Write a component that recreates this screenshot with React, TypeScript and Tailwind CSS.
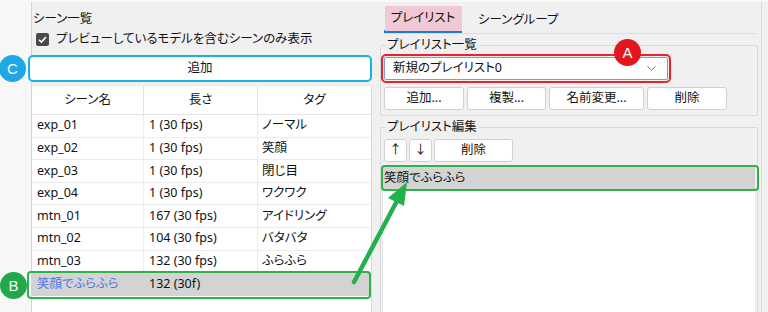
import { ChevronDown } from "lucide-react";

const scenes = [
  { name: "exp_01", length: "1 (30 fps)", tag: "ノーマル" },
  { name: "exp_02", length: "1 (30 fps)", tag: "笑顔" },
  { name: "exp_03", length: "1 (30 fps)", tag: "閉じ目" },
  { name: "exp_04", length: "1 (30 fps)", tag: "ワクワク" },
  { name: "mtn_01", length: "167 (30 fps)", tag: "アイドリング" },
  { name: "mtn_02", length: "104 (30 fps)", tag: "バタバタ" },
  { name: "mtn_03", length: "132 (30 fps)", tag: "ふらふら" },
];

const font =
  "font-['Noto_Sans','Noto_Sans_CJK_JP',sans-serif] [font-feature-settings:'palt']";

function Badge({ letter, className }: { letter: string; className: string }) {
  return (
    <span
      className={`absolute flex h-[27px] w-[27px] items-center justify-center rounded-full text-[15px] leading-none text-white font-['Liberation_Sans',sans-serif] ${className}`}
    >
      {letter}
    </span>
  );
}

function WinButton({ label, className = "" }: { label: string; className?: string }) {
  return (
    <button className={`h-[23px] rounded-[3px] border border-[#d0d0d0] bg-white text-[12.5px] leading-none text-[#111] ${className}`}>
      {label}
    </button>
  );
}

export default function App() {
  return (
    <div className={`relative flex h-[312px] w-[768px] overflow-hidden border-t-2 border-[#f8f8f8] bg-[#f0f0f0] text-[12.5px] text-[#111] ${font}`}>
      <div className="w-[32px] shrink-0 border-r border-[#d4d4d4] bg-[#f7f7f7]" />

      {/* left: scene list */}
      <div className="flex w-[340px] shrink-0 flex-col pt-[9px]">
        <p className="pl-[1px] leading-[16px]">シーン一覧</p>
        <label className="mt-[4px] flex items-center gap-[7px] pl-[4px] leading-[16px]">
          <span className="flex h-[13px] w-[13px] items-center justify-center rounded-[2px] bg-[#4a4a4a]">
            <svg viewBox="0 0 12 12" className="h-[11px] w-[11px]">
              <path d="M2.2 6.3 L4.8 8.8 L9.8 3.2" fill="none" stroke="white" strokeWidth="1.8" />
            </svg>
          </span>
          プレビューしているモデルを含むシーンのみ表示
        </label>
        <button className="relative -ml-[2px] mt-[10px] h-[23px] w-[340px] rounded-[3px] bg-white leading-none outline-2 outline-[#1ab1e6]">
          追加
        </button>

        <div className="mt-[6px] flex-1 border-r border-[#d8d8d8] bg-white">
          <div className="grid h-[29px] grid-cols-[112px_114px_113px] border-b border-[#e2e2e2]">
            {["シーン名", "長さ", "タグ"].map((h, i) => (
              <div key={h} className={`flex items-center justify-center ${i < 2 ? "border-r border-[#e2e2e2]" : ""}`}>
                {h}
              </div>
            ))}
          </div>
          {scenes.map((s) => (
            <div key={s.name} className="grid h-[22.6px] grid-cols-[112px_114px_113px] border-b border-[#ececec]">
              <div className="flex items-center border-r border-[#ececec] pl-[5px]">{s.name}</div>
              <div className="flex items-center border-r border-[#ececec] pl-[5px]">{s.length}</div>
              <div className="flex items-center pl-[4px]">{s.tag}</div>
            </div>
          ))}
          <div className="relative grid h-[23px] grid-cols-[112px_114px_113px] bg-[#d3d3d3]">
            <div className="flex items-center pl-[5px] text-[#4a78e6]">笑顔でふらふら</div>
            <div className="flex items-center pl-[5px]">132 (30f)</div>
            <div />
            <span className="absolute -top-[2px] -bottom-[3px] -left-[5px] right-0 rounded-[4px] border-2 border-[#2db24c]" />
          </div>
        </div>
      </div>

      <div className="w-[8px] shrink-0" />

      {/* right: playlist */}
      <div className="flex w-[382px] shrink-0 flex-col border-r border-[#dcdcdc] pr-[3px]">
        <div className="ml-[4px] mr-[1px] mt-[3px] flex border-b border-[#dedede]">
          <div className="flex h-[28px] w-[78px] items-center justify-center border-b-[3px] border-[#1f7ad4] pt-[2px]">
            <span className="flex h-[25px] w-[77px] items-center justify-center bg-[#f1c9d6]">プレイリスト</span>
          </div>
          <div className="flex h-[28px] items-center pl-[16px] pt-[2px]">シーングループ</div>
        </div>

        <fieldset className="mt-[3px] rounded-[2px] border border-[#d9d9d9] pb-[5px] pl-[3px] pr-[3px]">
          <legend className="ml-[1px] px-[2px] leading-[16px]">プレイリスト一覧</legend>
          <div className="relative mt-[4px] flex h-[23px] w-[284px] items-center justify-between rounded-[2px] border border-[#7a9cd6] bg-white pl-[8px] pr-[8px] outline-2 outline-offset-1 outline-[#e8232b]">
            <span>新規のプレイリスト0</span>
            <ChevronDown size={15} strokeWidth={1.3} className="text-[#555]" />
          </div>
          <div className="mt-[7px] flex gap-[3px]">
            <WinButton label="追加..." className="w-[80px]" />
            <WinButton label="複製..." className="w-[79px]" />
            <WinButton label="名前変更..." className="w-[95px]" />
            <WinButton label="削除" className="w-[80px]" />
          </div>
        </fieldset>

        <fieldset className="mt-[3px] flex min-h-0 flex-1 flex-col rounded-[2px] border border-b-0 border-[#d9d9d9] pl-[1px] pr-[2px]">
          <legend className="ml-[3px] px-[2px] leading-[16px]">プレイリスト編集</legend>
          <div className="ml-[2px] mt-[4px] flex gap-[2px]">
            <WinButton label="↑" className="w-[23px]" />
            <WinButton label="↓" className="w-[23px]" />
            <WinButton label="削除" className="w-[79px]" />
          </div>
          <div className="mt-[4px] flex-1 border-l border-[#e4e4e4] bg-white">
            <div className="relative flex h-[24px] items-center bg-[#d3d3d3] pl-[1px]">
              笑顔でふらふら
              <span className="absolute -top-[1px] -bottom-[1px] -left-[2px] -right-[4px] rounded-[4px] border-2 border-[#2db24c]" />
            </div>
          </div>
        </fieldset>
      </div>

      {/* annotations */}
      <svg className="pointer-events-none absolute left-0 top-0" width="768" height="312" viewBox="0 0 768 312">
        <line x1="354" y1="280" x2="398" y2="197" stroke="#22b14c" strokeWidth="4.5" strokeLinecap="round" />
        <polygon points="407,180 388,196 404,204" fill="#22b14c" />
      </svg>
      <Badge letter="C" className="left-[-1px] top-[53px] bg-[#1ea8e5]" />
      <Badge letter="B" className="left-[0px] top-[270px] bg-[#20a84a]" />
      <Badge letter="A" className="left-[614px] top-[37px] bg-[#e3161e]" />
    </div>
  );
}
